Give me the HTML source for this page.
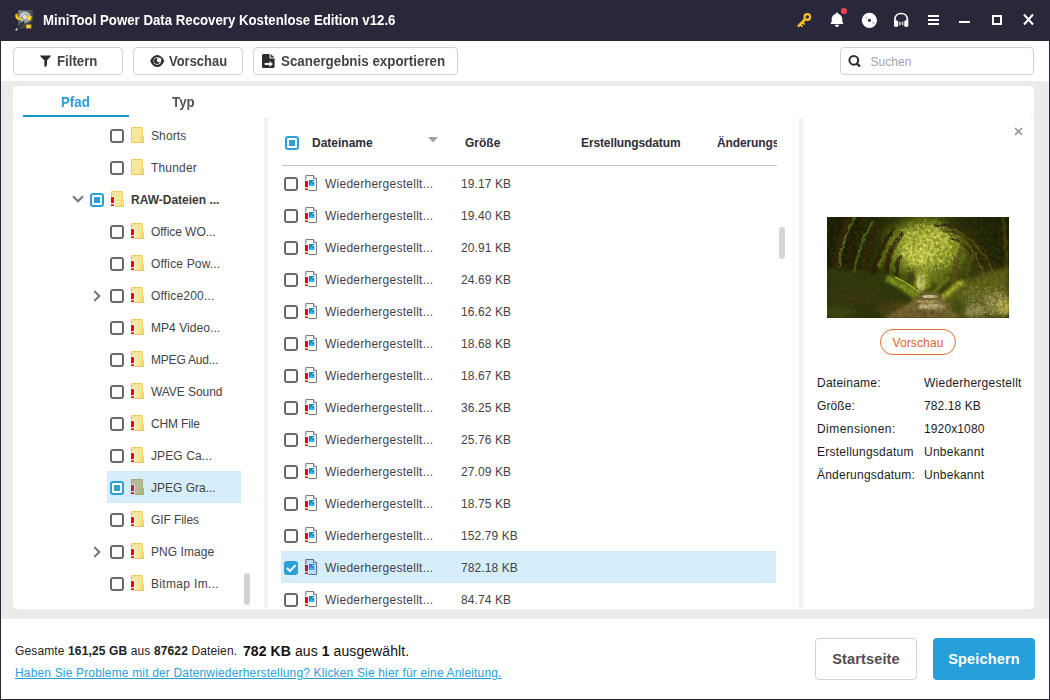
<!DOCTYPE html>
<html lang="de">
<head>
<meta charset="utf-8">
<title>MiniTool Power Data Recovery Kostenlose Edition v12.6</title>
<style>
*{box-sizing:border-box;margin:0;padding:0}
html,body{width:1050px;height:700px;overflow:hidden;background:#fff}
body{font-family:"Liberation Sans",sans-serif;color:#333;position:relative}
.a{position:absolute}
svg{position:absolute;overflow:visible}
#win{position:absolute;left:0;top:0;width:1050px;height:700px;background:#ebebeb;overflow:hidden}
#title{position:absolute;left:0;top:0;width:1050px;height:41px;background:#28283a}
#title .t{position:absolute;left:43px;top:11.8px;font-size:14px;transform:scaleX(0.9445);transform-origin:0 0;font-weight:bold;color:#fff;white-space:nowrap;line-height:16px}
#toolbar{position:absolute;left:0;top:41px;width:1050px;height:40px;background:#fff}
.tbtn{position:absolute;top:6px;height:28px;border:1px solid #d2d2d2;border-radius:4px;background:#fff;font-size:14px;font-weight:bold;color:#444;white-space:nowrap}
.tbtn span{position:absolute;top:-0.5px;line-height:27px;transform:scaleX(0.945);transform-origin:0 0}
#search{position:absolute;left:840px;top:6px;width:194px;height:28px;border:1px solid #d2d2d2;border-radius:4px;background:#fff}
#search span{position:absolute;left:29.4px;top:1px;line-height:27px;font-size:12px;letter-spacing:0.05px;color:#a3a3a3}
#panel{position:absolute;left:13px;top:86px;width:1021px;height:523px;background:#fff;border-radius:4px;overflow:hidden}
#footer{position:absolute;left:0;top:619px;width:1050px;height:81px;background:#fff}
.tab{position:absolute;top:94px;font-size:14px;transform:scaleX(0.95);transform-origin:0 0;font-weight:bold;line-height:16px;white-space:nowrap}
.trow{position:absolute;height:32px;font-size:12px;color:#444;white-space:nowrap;line-height:32px}
.cb{position:absolute;width:14px;height:14px;border:2px solid #6a6a6a;border-radius:3px;background:#fff}
.cb.p{border-color:#2a9fd8}
.cb.p:after{content:"";position:absolute;left:2px;top:2px;width:6px;height:6px;background:#2a9fd8}
.cb.c{border-color:#2a9fd8;background:#2a9fd8}
.tx{position:absolute;white-space:nowrap}
.t12{font-size:12px;color:#444;line-height:16px}
.hd{position:absolute;top:135px;font-size:12px;font-weight:bold;color:#2e2e38;line-height:16px;white-space:nowrap}
.kv{position:absolute;font-size:12px;color:#1c1c1c;line-height:16px;white-space:nowrap;overflow:hidden;letter-spacing:0.25px}
.btn{position:absolute;top:638px;height:42px;border-radius:4px;font-size:14.5px;letter-spacing:0.15px;font-weight:bold;text-align:center;line-height:40px;white-space:nowrap}
</style>
</head>
<body>
<div id="win">
<div id="title">
<svg style="left:15px;top:9.5px" width="20" height="22" viewBox="0 0 20 22">
<defs><linearGradient id="hd" x1="0" y1="0" x2="1" y2="1"><stop offset="0" stop-color="#8b9499"/><stop offset="0.45" stop-color="#4d565b"/><stop offset="1" stop-color="#1f2528"/></linearGradient>
<radialGradient id="pl" cx="0.4" cy="0.35" r="0.7"><stop offset="0" stop-color="#eef2f4"/><stop offset="0.55" stop-color="#aab5bb"/><stop offset="1" stop-color="#6f7a80"/></radialGradient></defs>
<rect x="3.2" y="0.3" width="14.8" height="18.2" rx="0.8" fill="url(#hd)"/>
<circle cx="10.2" cy="7.6" r="6" fill="url(#pl)"/>
<circle cx="10.2" cy="7.6" r="3.2" fill="none" stroke="#8d989e" stroke-width="0.8"/>
<circle cx="10.2" cy="7.6" r="1.3" fill="#dfe5e8"/>
<circle cx="6.9" cy="7.8" r="0.7" fill="#e03030"/>
<circle cx="10.6" cy="4.2" r="0.7" fill="#5a9ae0"/>
<path d="M0.3 5.4C0 9 3.8 11.2 8 9.4C5.6 9.2 2.8 7.8 2.6 4.8C1.6 4 0.5 4.4 0.3 5.4Z" fill="#f6d21a"/>
<path d="M0.5 5.2C0.9 4 2.2 3.8 3 4.4" fill="none" stroke="#f08a1a" stroke-width="1.1"/>
<path d="M0.8 20.2L11 9.8" stroke="#22272a" stroke-width="1.6"/><path d="M0.6 20.4L2.4 18.6" stroke="#d9dee1" stroke-width="1.4"/><path d="M9.2 11.6L11.2 9.6" stroke="#b9c0c4" stroke-width="1.3"/>
<path d="M14.2 4L15.3 6.3L17.8 6.6L16 8.4L16.4 10.9L14.2 9.7L12 10.9L12.4 8.4L10.6 6.6L13.1 6.3Z" fill="#f7c81a"/>
<path d="M14.2 5.4L14.8 6.9L16.3 7.1L15.2 8.1L15.5 9.6L14.2 8.9L12.9 9.6L13.2 8.1L12.1 7.1L13.6 6.9Z" fill="#fde45c"/>
<rect x="11" y="14.4" width="5.4" height="4.1" fill="#c99a12"/><rect x="11.7" y="15" width="4" height="2.9" fill="#f2c62e"/><path d="M13.2 15.6L14.7 16.45L13.2 17.3Z" fill="#fff7d0"/>
</svg>

<div class="t">MiniTool Power Data Recovery Kostenlose Edition v12.6</div>
<svg style="left:790px;top:0" width="260" height="41" viewBox="790 0 260 41">
<g fill="none" stroke="#f5c226" stroke-linecap="round"><circle cx="807.3" cy="17" r="2.8" stroke-width="2.2"/><path d="M805 19.4L798.6 25.8" stroke-width="2.5"/><path d="M800.4 24.6L801.9 26.1M802.7 22.5L804.1 23.9" stroke-width="1.9"/></g>
<path d="M837 12.6C837.8 12.6 838.1 13.2 838.2 13.8C840.6 14.5 842.3 16.4 842.3 19V21C842.3 22 842.7 22.6 843.3 23.2V24H830.7V23.2C831.3 22.6 831.7 22 831.7 21V19C831.7 16.4 833.4 14.5 835.8 13.8C835.9 13.2 836.2 12.6 837 12.6Z" fill="#fff"/>
<path d="M834.9 24.8H839.1C839 26.1 838.2 27 837 27C835.8 27 835 26.1 834.9 24.8Z" fill="#fff"/>
<circle cx="844" cy="11" r="3.1" fill="#ec424f"/>
<circle cx="869.4" cy="20.3" r="7.6" fill="#fff"/><rect x="868" y="18.9" width="2.8" height="2.8" rx="0.6" fill="#28283a"/>
<path d="M865.5 17.6L866.5 16.6M866.6 18.7L867.6 17.7M872.2 23L873.2 22M873.3 24.1L874.3 23.1" stroke="#6a6b7c" stroke-width="0.9"/>
<path d="M894.9 22V19.8C894.9 16 897.6 13.5 901.1 13.5C904.6 13.5 907.4 16 907.4 19.8V22" fill="none" stroke="#fff" stroke-width="1.7"/>
<rect x="894" y="20.2" width="4.1" height="6.9" rx="1.8" fill="#fff"/><rect x="904.2" y="20.2" width="4.1" height="6.9" rx="1.8" fill="#fff"/>
<path d="M898.9 21.3L900.7 22.2V24.8L898.9 25.7ZM903.4 21.3L901.6 22.2V24.8L903.4 25.7Z" fill="#c4c5cf"/>
<g fill="#fff"><rect x="928" y="15" width="11" height="2"/><rect x="928" y="19" width="11" height="2"/><rect x="928" y="23" width="11" height="2"/><rect x="959" y="21" width="11" height="2"/></g>
<rect x="993" y="16" width="8" height="8" fill="none" stroke="#fff" stroke-width="2"/>
<path d="M1024 14.5L1033 24.5M1033 14.5L1024 24.5" stroke="#fff" stroke-width="2" fill="none"/>
</svg>

</div>
<div id="toolbar">
<div class="tbtn" style="left:13px;width:110px"><svg style="left:26px;top:7px" width="12" height="13" viewBox="0 0 12 13"><path d="M0.3 0.4H10.7Q11.3 0.4 10.9 0.9L7 5.6V10.4L4.4 12.2V5.6L0.1 0.9Q-0.3 0.4 0.3 0.4Z" fill="#2d2d2d"/></svg>
<span style="left:43px">Filtern</span></div>
<div class="tbtn" style="left:133px;width:110px"><svg style="left:16px;top:7px" width="15" height="12" viewBox="0 0 15 12"><path d="M0.1 6C1.7 2.3 4.3 -0.1 7.2 -0.1C10.1 -0.1 12.7 2.3 14.3 6C12.7 9.7 10.1 12.1 7.2 12.1C4.3 12.1 1.7 9.7 0.1 6Z" fill="#2d2d2d"/><circle cx="7.2" cy="6" r="3.7" fill="#fff"/><circle cx="7" cy="6.1" r="3" fill="#2d2d2d"/><circle cx="9" cy="5" r="2.3" fill="#fff"/></svg>
<span style="left:35px;transform:scaleX(0.925)">Vorschau</span></div>
<div class="tbtn" style="left:253px;width:205px"><svg style="left:8px;top:6px" width="13" height="14" viewBox="0 0 13 14"><path d="M1.6 0H7.6V4.4H12.6V12.4Q12.6 14 11 14H1.6Q0 14 0 12.4V1.6Q0 0 1.6 0Z" fill="#2d2d2d"/><path d="M8.6 0L12.6 3.6H8.6Z" fill="#2d2d2d"/><path d="M2.6 9H7.4V7L11 10L7.4 13V11H2.6Z" fill="#fff"/></svg>
<span style="left:27px;transform:scaleX(0.955)">Scanergebnis exportieren</span></div>
<div id="search"><svg style="left:6px;top:6px" width="14" height="14" viewBox="0 0 14 14"><circle cx="6.8" cy="6.3" r="4.4" fill="none" stroke="#2d2d2d" stroke-width="2"/><path d="M10 9.6L12.3 11.9" stroke="#2d2d2d" stroke-width="2.3" stroke-linecap="round"/></svg>
<span>Suchen</span></div>
</div>
<div id="panel"></div>
<div class="a" style="left:264px;top:118px;width:4px;height:490px;background:#f1f2f7"></div>
<div class="a" style="left:799px;top:118px;width:4px;height:490px;background:#f1f2f7"></div>
<div class="a" style="left:1031px;top:116px;width:3px;height:1.5px;background:rgba(235,235,235,.8)"></div>
<div class="a" style="left:13px;top:116px;width:3px;height:1.5px;background:rgba(235,235,235,.6)"></div>
<div class="tab" style="left:61px;color:#2a9fd8">Pfad</div>
<div class="tab" style="left:171.5px;color:#555">Typ</div>
<div class="a" style="left:23px;top:115px;width:106px;height:2px;background:#1292d6"></div>
<div class="cb" style="left:110px;top:129px"></div>
<svg style="left:131px;top:127px" width="13" height="16" viewBox="0 0 13 16"><path d="M0.5 0.5H11.3V15.5H0.5Z" fill="#fde699" stroke="#f2cb5a"/><path d="M10.3 15.5V9.6Q10.3 8.9 11 8.9H11.8Q12.5 8.9 12.5 9.7V15.5Z" fill="#fde699" stroke="#f2cb5a"/></svg>
<div class="tx t12" style="left:151px;top:128px;letter-spacing:0.12px">Shorts</div>
<div class="cb" style="left:110px;top:161px"></div>
<svg style="left:131px;top:159px" width="13" height="16" viewBox="0 0 13 16"><path d="M0.5 0.5H11.3V15.5H0.5Z" fill="#fde699" stroke="#f2cb5a"/><path d="M10.3 15.5V9.6Q10.3 8.9 11 8.9H11.8Q12.5 8.9 12.5 9.7V15.5Z" fill="#fde699" stroke="#f2cb5a"/></svg>
<div class="tx t12" style="left:151px;top:160px;letter-spacing:0.17px">Thunder</div>
<svg style="left:72px;top:195.3px" width="12" height="8" viewBox="0 0 12 8"><path d="M1 1.2L6 6.3L11 1.2" fill="none" stroke="#787878" stroke-width="2.1"/></svg>
<div class="cb p" style="left:90px;top:193px"></div>
<svg style="left:111px;top:191px" width="13" height="16" viewBox="0 0 13 16"><path d="M0.5 0.5H11.3V15.5H0.5Z" fill="#fde699" stroke="#f2cb5a"/><path d="M10.3 15.5V9.6Q10.3 8.9 11 8.9H11.8Q12.5 8.9 12.5 9.7V15.5Z" fill="#fde699" stroke="#f2cb5a"/><path d="M-0.6 5.2H3.8V16H-0.6Z" fill="#fff"/><rect x="0" y="6.1" width="3" height="6" fill="#ff0000"/><rect x="0" y="13.3" width="3" height="1.8" fill="#ff0000"/></svg>
<div class="tx t12" style="left:131px;top:192px;font-weight:bold;color:#3a3a3a">RAW-Dateien ...</div>
<div class="cb" style="left:110px;top:225px"></div>
<svg style="left:131px;top:223px" width="13" height="16" viewBox="0 0 13 16"><path d="M0.5 0.5H11.3V15.5H0.5Z" fill="#fde699" stroke="#f2cb5a"/><path d="M10.3 15.5V9.6Q10.3 8.9 11 8.9H11.8Q12.5 8.9 12.5 9.7V15.5Z" fill="#fde699" stroke="#f2cb5a"/><path d="M-0.6 5.2H3.8V16H-0.6Z" fill="#fff"/><rect x="0" y="6.1" width="3" height="6" fill="#ff0000"/><rect x="0" y="13.3" width="3" height="1.8" fill="#ff0000"/></svg>
<div class="tx t12" style="left:151px;top:224px;letter-spacing:-0.05px">Office WO...</div>
<div class="cb" style="left:110px;top:257px"></div>
<svg style="left:131px;top:255px" width="13" height="16" viewBox="0 0 13 16"><path d="M0.5 0.5H11.3V15.5H0.5Z" fill="#fde699" stroke="#f2cb5a"/><path d="M10.3 15.5V9.6Q10.3 8.9 11 8.9H11.8Q12.5 8.9 12.5 9.7V15.5Z" fill="#fde699" stroke="#f2cb5a"/><path d="M-0.6 5.2H3.8V16H-0.6Z" fill="#fff"/><rect x="0" y="6.1" width="3" height="6" fill="#ff0000"/><rect x="0" y="13.3" width="3" height="1.8" fill="#ff0000"/></svg>
<div class="tx t12" style="left:151px;top:256px;letter-spacing:0.17px">Office Pow...</div>
<svg style="left:93px;top:289.5px" width="8" height="12" viewBox="0 0 8 12"><path d="M1.2 1L6.3 6L1.2 11" fill="none" stroke="#787878" stroke-width="2.1"/></svg>
<div class="cb" style="left:110px;top:289px"></div>
<svg style="left:131px;top:287px" width="13" height="16" viewBox="0 0 13 16"><path d="M0.5 0.5H11.3V15.5H0.5Z" fill="#fde699" stroke="#f2cb5a"/><path d="M10.3 15.5V9.6Q10.3 8.9 11 8.9H11.8Q12.5 8.9 12.5 9.7V15.5Z" fill="#fde699" stroke="#f2cb5a"/><path d="M-0.6 5.2H3.8V16H-0.6Z" fill="#fff"/><rect x="0" y="6.1" width="3" height="6" fill="#ff0000"/><rect x="0" y="13.3" width="3" height="1.8" fill="#ff0000"/></svg>
<div class="tx t12" style="left:151px;top:288px;letter-spacing:0.20px">Office200...</div>
<div class="cb" style="left:110px;top:321px"></div>
<svg style="left:131px;top:319px" width="13" height="16" viewBox="0 0 13 16"><path d="M0.5 0.5H11.3V15.5H0.5Z" fill="#fde699" stroke="#f2cb5a"/><path d="M10.3 15.5V9.6Q10.3 8.9 11 8.9H11.8Q12.5 8.9 12.5 9.7V15.5Z" fill="#fde699" stroke="#f2cb5a"/><path d="M-0.6 5.2H3.8V16H-0.6Z" fill="#fff"/><rect x="0" y="6.1" width="3" height="6" fill="#ff0000"/><rect x="0" y="13.3" width="3" height="1.8" fill="#ff0000"/></svg>
<div class="tx t12" style="left:151px;top:320px;letter-spacing:0.06px">MP4 Video...</div>
<div class="cb" style="left:110px;top:353px"></div>
<svg style="left:131px;top:351px" width="13" height="16" viewBox="0 0 13 16"><path d="M0.5 0.5H11.3V15.5H0.5Z" fill="#fde699" stroke="#f2cb5a"/><path d="M10.3 15.5V9.6Q10.3 8.9 11 8.9H11.8Q12.5 8.9 12.5 9.7V15.5Z" fill="#fde699" stroke="#f2cb5a"/><path d="M-0.6 5.2H3.8V16H-0.6Z" fill="#fff"/><rect x="0" y="6.1" width="3" height="6" fill="#ff0000"/><rect x="0" y="13.3" width="3" height="1.8" fill="#ff0000"/></svg>
<div class="tx t12" style="left:151px;top:352px;letter-spacing:-0.20px">MPEG Aud...</div>
<div class="cb" style="left:110px;top:385px"></div>
<svg style="left:131px;top:383px" width="13" height="16" viewBox="0 0 13 16"><path d="M0.5 0.5H11.3V15.5H0.5Z" fill="#fde699" stroke="#f2cb5a"/><path d="M10.3 15.5V9.6Q10.3 8.9 11 8.9H11.8Q12.5 8.9 12.5 9.7V15.5Z" fill="#fde699" stroke="#f2cb5a"/><path d="M-0.6 5.2H3.8V16H-0.6Z" fill="#fff"/><rect x="0" y="6.1" width="3" height="6" fill="#ff0000"/><rect x="0" y="13.3" width="3" height="1.8" fill="#ff0000"/></svg>
<div class="tx t12" style="left:151px;top:384px;letter-spacing:-0.06px">WAVE Sound</div>
<div class="cb" style="left:110px;top:417px"></div>
<svg style="left:131px;top:415px" width="13" height="16" viewBox="0 0 13 16"><path d="M0.5 0.5H11.3V15.5H0.5Z" fill="#fde699" stroke="#f2cb5a"/><path d="M10.3 15.5V9.6Q10.3 8.9 11 8.9H11.8Q12.5 8.9 12.5 9.7V15.5Z" fill="#fde699" stroke="#f2cb5a"/><path d="M-0.6 5.2H3.8V16H-0.6Z" fill="#fff"/><rect x="0" y="6.1" width="3" height="6" fill="#ff0000"/><rect x="0" y="13.3" width="3" height="1.8" fill="#ff0000"/></svg>
<div class="tx t12" style="left:151px;top:416px;letter-spacing:-0.16px">CHM File</div>
<div class="cb" style="left:110px;top:449px"></div>
<svg style="left:131px;top:447px" width="13" height="16" viewBox="0 0 13 16"><path d="M0.5 0.5H11.3V15.5H0.5Z" fill="#fde699" stroke="#f2cb5a"/><path d="M10.3 15.5V9.6Q10.3 8.9 11 8.9H11.8Q12.5 8.9 12.5 9.7V15.5Z" fill="#fde699" stroke="#f2cb5a"/><path d="M-0.6 5.2H3.8V16H-0.6Z" fill="#fff"/><rect x="0" y="6.1" width="3" height="6" fill="#ff0000"/><rect x="0" y="13.3" width="3" height="1.8" fill="#ff0000"/></svg>
<div class="tx t12" style="left:151px;top:448px;letter-spacing:0.11px">JPEG Ca...</div>
<div class="a" style="left:107px;top:471px;width:134px;height:32px;background:#d6edfc"></div>
<div class="cb p" style="left:110px;top:481px"></div>
<svg style="left:131px;top:479px" width="13" height="16" viewBox="0 0 13 16"><path d="M0.5 0.5H11.3V15.5H0.5Z" fill="#b4bb90" stroke="#a3a878"/><path d="M10.3 15.5V9.6Q10.3 8.9 11 8.9H11.8Q12.5 8.9 12.5 9.7V15.5Z" fill="#b4bb90" stroke="#a3a878"/><path d="M-0.6 5.2H3.8V16H-0.6Z" fill="#d6edfc"/><rect x="0" y="6.1" width="3" height="6" fill="#c21840"/><rect x="0" y="13.3" width="3" height="1.8" fill="#c21840"/></svg>
<div class="tx t12" style="left:151px;top:480px;letter-spacing:0.00px">JPEG Gra...</div>
<div class="cb" style="left:110px;top:513px"></div>
<svg style="left:131px;top:511px" width="13" height="16" viewBox="0 0 13 16"><path d="M0.5 0.5H11.3V15.5H0.5Z" fill="#fde699" stroke="#f2cb5a"/><path d="M10.3 15.5V9.6Q10.3 8.9 11 8.9H11.8Q12.5 8.9 12.5 9.7V15.5Z" fill="#fde699" stroke="#f2cb5a"/><path d="M-0.6 5.2H3.8V16H-0.6Z" fill="#fff"/><rect x="0" y="6.1" width="3" height="6" fill="#ff0000"/><rect x="0" y="13.3" width="3" height="1.8" fill="#ff0000"/></svg>
<div class="tx t12" style="left:151px;top:512px;letter-spacing:-0.08px">GIF Files</div>
<svg style="left:93px;top:545.5px" width="8" height="12" viewBox="0 0 8 12"><path d="M1.2 1L6.3 6L1.2 11" fill="none" stroke="#787878" stroke-width="2.1"/></svg>
<div class="cb" style="left:110px;top:545px"></div>
<svg style="left:131px;top:543px" width="13" height="16" viewBox="0 0 13 16"><path d="M0.5 0.5H11.3V15.5H0.5Z" fill="#fde699" stroke="#f2cb5a"/><path d="M10.3 15.5V9.6Q10.3 8.9 11 8.9H11.8Q12.5 8.9 12.5 9.7V15.5Z" fill="#fde699" stroke="#f2cb5a"/><path d="M-0.6 5.2H3.8V16H-0.6Z" fill="#fff"/><rect x="0" y="6.1" width="3" height="6" fill="#ff0000"/><rect x="0" y="13.3" width="3" height="1.8" fill="#ff0000"/></svg>
<div class="tx t12" style="left:151px;top:544px;letter-spacing:0.05px">PNG Image</div>
<div class="cb" style="left:110px;top:577px"></div>
<svg style="left:131px;top:575px" width="13" height="16" viewBox="0 0 13 16"><path d="M0.5 0.5H11.3V15.5H0.5Z" fill="#fde699" stroke="#f2cb5a"/><path d="M10.3 15.5V9.6Q10.3 8.9 11 8.9H11.8Q12.5 8.9 12.5 9.7V15.5Z" fill="#fde699" stroke="#f2cb5a"/><path d="M-0.6 5.2H3.8V16H-0.6Z" fill="#fff"/><rect x="0" y="6.1" width="3" height="6" fill="#ff0000"/><rect x="0" y="13.3" width="3" height="1.8" fill="#ff0000"/></svg>
<div class="tx t12" style="left:151px;top:576px;letter-spacing:0.33px">Bitmap Im...</div>
<div class="a" style="left:244px;top:573px;width:6px;height:32px;border-radius:3px;background:#d2d2d2"></div>
<div class="cb p" style="left:285px;top:136px"></div>
<div class="hd" style="left:312px">Dateiname</div>
<svg style="left:428px;top:137px" width="10" height="6" viewBox="0 0 10 6"><path d="M0 0H10L5 5.5Z" fill="#a0a0a0"/></svg>
<div class="hd" style="left:465px">Größe</div>
<div class="hd" style="left:581px;letter-spacing:-0.12px">Erstellungsdatum</div>
<div class="hd" style="left:717px;width:60px;overflow:hidden;letter-spacing:-0.12px">Änderungsdatum</div>
<div class="a" style="left:282px;top:165px;width:495px;height:1px;background:#c4c4c4"></div>
<div class="cb" style="left:284px;top:177px"></div>
<svg style="left:305px;top:175px" width="13" height="16" viewBox="0 0 13 16"><path d="M0.8 0.5H8.5L11.6 3.6V15.5H0.8Z" fill="#fbfbfb" stroke="#777" stroke-width="1"/><path d="M8.5 0.5V3.6H11.6" fill="#fff" stroke="#777" stroke-width="1"/><rect x="4" y="5" width="5.2" height="6" fill="#1e7fe0"/><path d="M4 11L6.2 7.5L7.8 9.5L9.2 8.5V11Z" fill="#3fb0f5"/><rect x="7.3" y="6" width="1.2" height="1.2" fill="#e8f4ff"/><path d="M-0.6 5.2H3.6V16.4H-0.6Z" fill="#fff"/><rect x="0" y="6" width="3" height="6.3" fill="#ff0000"/><rect x="0" y="13.5" width="3" height="1.6" fill="#ff0000"/></svg>
<div class="tx t12" style="left:325px;top:176px;letter-spacing:0.25px">Wiederhergestellt...</div>
<div class="tx t12" style="left:461px;top:176px;letter-spacing:0.1px">19.17 KB</div>
<div class="cb" style="left:284px;top:209px"></div>
<svg style="left:305px;top:207px" width="13" height="16" viewBox="0 0 13 16"><path d="M0.8 0.5H8.5L11.6 3.6V15.5H0.8Z" fill="#fbfbfb" stroke="#777" stroke-width="1"/><path d="M8.5 0.5V3.6H11.6" fill="#fff" stroke="#777" stroke-width="1"/><rect x="4" y="5" width="5.2" height="6" fill="#1e7fe0"/><path d="M4 11L6.2 7.5L7.8 9.5L9.2 8.5V11Z" fill="#3fb0f5"/><rect x="7.3" y="6" width="1.2" height="1.2" fill="#e8f4ff"/><path d="M-0.6 5.2H3.6V16.4H-0.6Z" fill="#fff"/><rect x="0" y="6" width="3" height="6.3" fill="#ff0000"/><rect x="0" y="13.5" width="3" height="1.6" fill="#ff0000"/></svg>
<div class="tx t12" style="left:325px;top:208px;letter-spacing:0.25px">Wiederhergestellt...</div>
<div class="tx t12" style="left:461px;top:208px;letter-spacing:0.1px">19.40 KB</div>
<div class="cb" style="left:284px;top:241px"></div>
<svg style="left:305px;top:239px" width="13" height="16" viewBox="0 0 13 16"><path d="M0.8 0.5H8.5L11.6 3.6V15.5H0.8Z" fill="#fbfbfb" stroke="#777" stroke-width="1"/><path d="M8.5 0.5V3.6H11.6" fill="#fff" stroke="#777" stroke-width="1"/><rect x="4" y="5" width="5.2" height="6" fill="#1e7fe0"/><path d="M4 11L6.2 7.5L7.8 9.5L9.2 8.5V11Z" fill="#3fb0f5"/><rect x="7.3" y="6" width="1.2" height="1.2" fill="#e8f4ff"/><path d="M-0.6 5.2H3.6V16.4H-0.6Z" fill="#fff"/><rect x="0" y="6" width="3" height="6.3" fill="#ff0000"/><rect x="0" y="13.5" width="3" height="1.6" fill="#ff0000"/></svg>
<div class="tx t12" style="left:325px;top:240px;letter-spacing:0.25px">Wiederhergestellt...</div>
<div class="tx t12" style="left:461px;top:240px;letter-spacing:0.1px">20.91 KB</div>
<div class="cb" style="left:284px;top:273px"></div>
<svg style="left:305px;top:271px" width="13" height="16" viewBox="0 0 13 16"><path d="M0.8 0.5H8.5L11.6 3.6V15.5H0.8Z" fill="#fbfbfb" stroke="#777" stroke-width="1"/><path d="M8.5 0.5V3.6H11.6" fill="#fff" stroke="#777" stroke-width="1"/><rect x="4" y="5" width="5.2" height="6" fill="#1e7fe0"/><path d="M4 11L6.2 7.5L7.8 9.5L9.2 8.5V11Z" fill="#3fb0f5"/><rect x="7.3" y="6" width="1.2" height="1.2" fill="#e8f4ff"/><path d="M-0.6 5.2H3.6V16.4H-0.6Z" fill="#fff"/><rect x="0" y="6" width="3" height="6.3" fill="#ff0000"/><rect x="0" y="13.5" width="3" height="1.6" fill="#ff0000"/></svg>
<div class="tx t12" style="left:325px;top:272px;letter-spacing:0.25px">Wiederhergestellt...</div>
<div class="tx t12" style="left:461px;top:272px;letter-spacing:0.1px">24.69 KB</div>
<div class="cb" style="left:284px;top:305px"></div>
<svg style="left:305px;top:303px" width="13" height="16" viewBox="0 0 13 16"><path d="M0.8 0.5H8.5L11.6 3.6V15.5H0.8Z" fill="#fbfbfb" stroke="#777" stroke-width="1"/><path d="M8.5 0.5V3.6H11.6" fill="#fff" stroke="#777" stroke-width="1"/><rect x="4" y="5" width="5.2" height="6" fill="#1e7fe0"/><path d="M4 11L6.2 7.5L7.8 9.5L9.2 8.5V11Z" fill="#3fb0f5"/><rect x="7.3" y="6" width="1.2" height="1.2" fill="#e8f4ff"/><path d="M-0.6 5.2H3.6V16.4H-0.6Z" fill="#fff"/><rect x="0" y="6" width="3" height="6.3" fill="#ff0000"/><rect x="0" y="13.5" width="3" height="1.6" fill="#ff0000"/></svg>
<div class="tx t12" style="left:325px;top:304px;letter-spacing:0.25px">Wiederhergestellt...</div>
<div class="tx t12" style="left:461px;top:304px;letter-spacing:0.1px">16.62 KB</div>
<div class="cb" style="left:284px;top:337px"></div>
<svg style="left:305px;top:335px" width="13" height="16" viewBox="0 0 13 16"><path d="M0.8 0.5H8.5L11.6 3.6V15.5H0.8Z" fill="#fbfbfb" stroke="#777" stroke-width="1"/><path d="M8.5 0.5V3.6H11.6" fill="#fff" stroke="#777" stroke-width="1"/><rect x="4" y="5" width="5.2" height="6" fill="#1e7fe0"/><path d="M4 11L6.2 7.5L7.8 9.5L9.2 8.5V11Z" fill="#3fb0f5"/><rect x="7.3" y="6" width="1.2" height="1.2" fill="#e8f4ff"/><path d="M-0.6 5.2H3.6V16.4H-0.6Z" fill="#fff"/><rect x="0" y="6" width="3" height="6.3" fill="#ff0000"/><rect x="0" y="13.5" width="3" height="1.6" fill="#ff0000"/></svg>
<div class="tx t12" style="left:325px;top:336px;letter-spacing:0.25px">Wiederhergestellt...</div>
<div class="tx t12" style="left:461px;top:336px;letter-spacing:0.1px">18.68 KB</div>
<div class="cb" style="left:284px;top:369px"></div>
<svg style="left:305px;top:367px" width="13" height="16" viewBox="0 0 13 16"><path d="M0.8 0.5H8.5L11.6 3.6V15.5H0.8Z" fill="#fbfbfb" stroke="#777" stroke-width="1"/><path d="M8.5 0.5V3.6H11.6" fill="#fff" stroke="#777" stroke-width="1"/><rect x="4" y="5" width="5.2" height="6" fill="#1e7fe0"/><path d="M4 11L6.2 7.5L7.8 9.5L9.2 8.5V11Z" fill="#3fb0f5"/><rect x="7.3" y="6" width="1.2" height="1.2" fill="#e8f4ff"/><path d="M-0.6 5.2H3.6V16.4H-0.6Z" fill="#fff"/><rect x="0" y="6" width="3" height="6.3" fill="#ff0000"/><rect x="0" y="13.5" width="3" height="1.6" fill="#ff0000"/></svg>
<div class="tx t12" style="left:325px;top:368px;letter-spacing:0.25px">Wiederhergestellt...</div>
<div class="tx t12" style="left:461px;top:368px;letter-spacing:0.1px">18.67 KB</div>
<div class="cb" style="left:284px;top:401px"></div>
<svg style="left:305px;top:399px" width="13" height="16" viewBox="0 0 13 16"><path d="M0.8 0.5H8.5L11.6 3.6V15.5H0.8Z" fill="#fbfbfb" stroke="#777" stroke-width="1"/><path d="M8.5 0.5V3.6H11.6" fill="#fff" stroke="#777" stroke-width="1"/><rect x="4" y="5" width="5.2" height="6" fill="#1e7fe0"/><path d="M4 11L6.2 7.5L7.8 9.5L9.2 8.5V11Z" fill="#3fb0f5"/><rect x="7.3" y="6" width="1.2" height="1.2" fill="#e8f4ff"/><path d="M-0.6 5.2H3.6V16.4H-0.6Z" fill="#fff"/><rect x="0" y="6" width="3" height="6.3" fill="#ff0000"/><rect x="0" y="13.5" width="3" height="1.6" fill="#ff0000"/></svg>
<div class="tx t12" style="left:325px;top:400px;letter-spacing:0.25px">Wiederhergestellt...</div>
<div class="tx t12" style="left:461px;top:400px;letter-spacing:0.1px">36.25 KB</div>
<div class="cb" style="left:284px;top:433px"></div>
<svg style="left:305px;top:431px" width="13" height="16" viewBox="0 0 13 16"><path d="M0.8 0.5H8.5L11.6 3.6V15.5H0.8Z" fill="#fbfbfb" stroke="#777" stroke-width="1"/><path d="M8.5 0.5V3.6H11.6" fill="#fff" stroke="#777" stroke-width="1"/><rect x="4" y="5" width="5.2" height="6" fill="#1e7fe0"/><path d="M4 11L6.2 7.5L7.8 9.5L9.2 8.5V11Z" fill="#3fb0f5"/><rect x="7.3" y="6" width="1.2" height="1.2" fill="#e8f4ff"/><path d="M-0.6 5.2H3.6V16.4H-0.6Z" fill="#fff"/><rect x="0" y="6" width="3" height="6.3" fill="#ff0000"/><rect x="0" y="13.5" width="3" height="1.6" fill="#ff0000"/></svg>
<div class="tx t12" style="left:325px;top:432px;letter-spacing:0.25px">Wiederhergestellt...</div>
<div class="tx t12" style="left:461px;top:432px;letter-spacing:0.1px">25.76 KB</div>
<div class="cb" style="left:284px;top:465px"></div>
<svg style="left:305px;top:463px" width="13" height="16" viewBox="0 0 13 16"><path d="M0.8 0.5H8.5L11.6 3.6V15.5H0.8Z" fill="#fbfbfb" stroke="#777" stroke-width="1"/><path d="M8.5 0.5V3.6H11.6" fill="#fff" stroke="#777" stroke-width="1"/><rect x="4" y="5" width="5.2" height="6" fill="#1e7fe0"/><path d="M4 11L6.2 7.5L7.8 9.5L9.2 8.5V11Z" fill="#3fb0f5"/><rect x="7.3" y="6" width="1.2" height="1.2" fill="#e8f4ff"/><path d="M-0.6 5.2H3.6V16.4H-0.6Z" fill="#fff"/><rect x="0" y="6" width="3" height="6.3" fill="#ff0000"/><rect x="0" y="13.5" width="3" height="1.6" fill="#ff0000"/></svg>
<div class="tx t12" style="left:325px;top:464px;letter-spacing:0.25px">Wiederhergestellt...</div>
<div class="tx t12" style="left:461px;top:464px;letter-spacing:0.1px">27.09 KB</div>
<div class="cb" style="left:284px;top:497px"></div>
<svg style="left:305px;top:495px" width="13" height="16" viewBox="0 0 13 16"><path d="M0.8 0.5H8.5L11.6 3.6V15.5H0.8Z" fill="#fbfbfb" stroke="#777" stroke-width="1"/><path d="M8.5 0.5V3.6H11.6" fill="#fff" stroke="#777" stroke-width="1"/><rect x="4" y="5" width="5.2" height="6" fill="#1e7fe0"/><path d="M4 11L6.2 7.5L7.8 9.5L9.2 8.5V11Z" fill="#3fb0f5"/><rect x="7.3" y="6" width="1.2" height="1.2" fill="#e8f4ff"/><path d="M-0.6 5.2H3.6V16.4H-0.6Z" fill="#fff"/><rect x="0" y="6" width="3" height="6.3" fill="#ff0000"/><rect x="0" y="13.5" width="3" height="1.6" fill="#ff0000"/></svg>
<div class="tx t12" style="left:325px;top:496px;letter-spacing:0.25px">Wiederhergestellt...</div>
<div class="tx t12" style="left:461px;top:496px;letter-spacing:0.1px">18.75 KB</div>
<div class="cb" style="left:284px;top:529px"></div>
<svg style="left:305px;top:527px" width="13" height="16" viewBox="0 0 13 16"><path d="M0.8 0.5H8.5L11.6 3.6V15.5H0.8Z" fill="#fbfbfb" stroke="#777" stroke-width="1"/><path d="M8.5 0.5V3.6H11.6" fill="#fff" stroke="#777" stroke-width="1"/><rect x="4" y="5" width="5.2" height="6" fill="#1e7fe0"/><path d="M4 11L6.2 7.5L7.8 9.5L9.2 8.5V11Z" fill="#3fb0f5"/><rect x="7.3" y="6" width="1.2" height="1.2" fill="#e8f4ff"/><path d="M-0.6 5.2H3.6V16.4H-0.6Z" fill="#fff"/><rect x="0" y="6" width="3" height="6.3" fill="#ff0000"/><rect x="0" y="13.5" width="3" height="1.6" fill="#ff0000"/></svg>
<div class="tx t12" style="left:325px;top:528px;letter-spacing:0.25px">Wiederhergestellt...</div>
<div class="tx t12" style="left:461px;top:528px;letter-spacing:0.1px">152.79 KB</div>
<div class="a" style="left:281px;top:551px;width:495px;height:32px;background:#d6edfc"></div>
<div class="cb c" style="left:284px;top:561px"><svg style="left:-2px;top:-2px" width="14" height="14" viewBox="0 0 14 14"><path d="M2.9 7L6 10L11.6 4.1" fill="none" stroke="#fff" stroke-width="2"/></svg></div>
<svg style="left:305px;top:559px" width="13" height="16" viewBox="0 0 13 16"><path d="M0.8 0.5H8.5L11.6 3.6V15.5H0.8Z" fill="#bcdcf4" stroke="#4f6f8f" stroke-width="1"/><path d="M8.5 0.5V3.6H11.6" fill="#d4eafa" stroke="#4f6f8f" stroke-width="1"/><rect x="4" y="5" width="5.2" height="6" fill="#1e7fe0"/><path d="M4 11L6.2 7.5L7.8 9.5L9.2 8.5V11Z" fill="#3fb0f5"/><rect x="7.3" y="6" width="1.2" height="1.2" fill="#e8f4ff"/><path d="M-0.6 5.2H3.6V16.4H-0.6Z" fill="#d6edfc"/><rect x="0" y="6" width="3" height="6.3" fill="#c4122e"/><rect x="0" y="13.5" width="3" height="1.6" fill="#c4122e"/></svg>
<div class="tx t12" style="left:325px;top:560px;letter-spacing:0.25px">Wiederhergestellt...</div>
<div class="tx t12" style="left:461px;top:560px;letter-spacing:0.1px">782.18 KB</div>
<div class="cb" style="left:284px;top:593px"></div>
<svg style="left:305px;top:591px" width="13" height="16" viewBox="0 0 13 16"><path d="M0.8 0.5H8.5L11.6 3.6V15.5H0.8Z" fill="#fbfbfb" stroke="#777" stroke-width="1"/><path d="M8.5 0.5V3.6H11.6" fill="#fff" stroke="#777" stroke-width="1"/><rect x="4" y="5" width="5.2" height="6" fill="#1e7fe0"/><path d="M4 11L6.2 7.5L7.8 9.5L9.2 8.5V11Z" fill="#3fb0f5"/><rect x="7.3" y="6" width="1.2" height="1.2" fill="#e8f4ff"/><path d="M-0.6 5.2H3.6V16.4H-0.6Z" fill="#fff"/><rect x="0" y="6" width="3" height="6.3" fill="#ff0000"/><rect x="0" y="13.5" width="3" height="1.6" fill="#ff0000"/></svg>
<div class="tx t12" style="left:325px;top:592px;letter-spacing:0.25px">Wiederhergestellt...</div>
<div class="tx t12" style="left:461px;top:592px;letter-spacing:0.1px">84.74 KB</div>
<div class="a" style="left:779px;top:227px;width:6px;height:32px;border-radius:3px;background:#d5d5d5"></div>
<div class="a" style="left:0;top:609px;width:1050px;height:10px;background:#ebebeb"></div>
<svg style="left:1014px;top:127px" width="9" height="9" viewBox="0 0 9 9"><path d="M1 1L8 8M8 1L1 8" stroke="#9a9a9a" stroke-width="1.7" fill="none"/></svg>
<svg style="left:827px;top:217px" width="182" height="101" viewBox="0 0 182 101">
<defs>
<filter id="b6" x="-40%" y="-40%" width="180%" height="180%"><feGaussianBlur stdDeviation="6"/></filter>
<filter id="b4" x="-40%" y="-40%" width="180%" height="180%"><feGaussianBlur stdDeviation="4"/></filter>
<filter id="b3" x="-40%" y="-40%" width="180%" height="180%"><feGaussianBlur stdDeviation="2.6"/></filter>
<filter id="b2" x="-40%" y="-40%" width="180%" height="180%"><feGaussianBlur stdDeviation="1.4"/></filter>
<filter id="b1" x="-40%" y="-40%" width="180%" height="180%"><feGaussianBlur stdDeviation="0.7"/></filter>
<filter id="nz" x="0" y="0" width="100%" height="100%"><feTurbulence type="fractalNoise" baseFrequency="0.3" numOctaves="3" seed="7"/><feColorMatrix type="matrix" values="0 0 0 0 0.5  0 0 0 0 0.5  0 0 0 0 0.2  1.6 1.6 0 0 -1.1"/></filter>
<filter id="nd" x="0" y="0" width="100%" height="100%"><feTurbulence type="fractalNoise" baseFrequency="0.28" numOctaves="3" seed="23"/><feColorMatrix type="matrix" values="0 0 0 0 0.05  0 0 0 0 0.05  0 0 0 0 0  0 1.7 1.7 0 -1.25"/></filter>
<filter id="rg" x="-10%" y="-10%" width="120%" height="120%"><feTurbulence type="fractalNoise" baseFrequency="0.18" numOctaves="2" seed="3" result="t"/><feDisplacementMap in="SourceGraphic" in2="t" scale="5" xChannelSelector="R" yChannelSelector="G"/><feGaussianBlur stdDeviation="0.5"/></filter>
<filter id="ny" x="0" y="0" width="100%" height="100%"><feTurbulence type="fractalNoise" baseFrequency="0.55" numOctaves="2" seed="11"/><feColorMatrix type="matrix" values="0 0 0 0 0.88  0 0 0 0 0.9  0 0 0 0 0.38  2.6 0 2.6 0 -2.45"/></filter>
<filter id="nw" x="0" y="0" width="100%" height="100%"><feTurbulence type="fractalNoise" baseFrequency="0.6" numOctaves="2" seed="31"/><feColorMatrix type="matrix" values="0 0 0 0 0.9  0 0 0 0 0.88  0 0 0 0 0.7  2.8 2.8 0 0 -2.75"/></filter>
<radialGradient id="mg1" cx="0.5" cy="0.5" r="0.5"><stop offset="0" stop-color="#fff"/><stop offset="0.6" stop-color="#fff" stop-opacity="0.8"/><stop offset="1" stop-color="#fff" stop-opacity="0"/></radialGradient>
<mask id="mk1"><ellipse cx="100" cy="30" rx="40" ry="32" fill="url(#mg1)"/></mask>
<mask id="mk2"><ellipse cx="160" cy="84" rx="30" ry="22" fill="url(#mg1)"/></mask>
<radialGradient id="vg" gradientUnits="userSpaceOnUse" cx="100" cy="44" r="100" gradientTransform="translate(100 44) scale(1 0.72) translate(-100 -44)"><stop offset="0" stop-color="#0e1204" stop-opacity="0"/><stop offset="0.42" stop-color="#0e1204" stop-opacity="0.05"/><stop offset="0.7" stop-color="#0e1204" stop-opacity="0.45"/><stop offset="1" stop-color="#0e1204" stop-opacity="0.7"/></radialGradient>
<clipPath id="fc"><rect x="0" y="0" width="182" height="101"/></clipPath>
</defs>
<g clip-path="url(#fc)">
<rect width="182" height="101" fill="#343a10"/>
<!-- bright canopy -->
<ellipse cx="98" cy="30" rx="44" ry="32" fill="#70821c" filter="url(#b6)"/>
<ellipse cx="100" cy="28" rx="30" ry="22" fill="#a4b22c" filter="url(#b4)"/>
<ellipse cx="92" cy="36" rx="16" ry="12" fill="#d0d84e" filter="url(#b3)"/>
<ellipse cx="108" cy="20" rx="16" ry="8" fill="#c0cc40" filter="url(#b3)"/>
<ellipse cx="84" cy="22" rx="10" ry="8" fill="#b4c238" filter="url(#b3)"/>
<!-- dark sides -->
<ellipse cx="20" cy="26" rx="32" ry="38" fill="#1f230a" filter="url(#b6)"/>
<ellipse cx="168" cy="22" rx="26" ry="32" fill="#20230a" filter="url(#b6)"/>
<ellipse cx="146" cy="6" rx="32" ry="8" fill="#23280c" filter="url(#b4)"/>
<ellipse cx="36" cy="3" rx="38" ry="6" fill="#222a0c" filter="url(#b4)"/>
<ellipse cx="10" cy="40" rx="22" ry="44" fill="#1a1e08" filter="url(#b4)" opacity="0.85"/>
<ellipse cx="40" cy="30" rx="16" ry="30" fill="#232609" filter="url(#b4)" opacity="0.7"/>
<ellipse cx="172" cy="30" rx="16" ry="34" fill="#1e2109" filter="url(#b4)" opacity="0.8"/>
<rect width="182" height="101" fill="url(#vg)"/>
<!-- trunks left -->
<g fill="none" stroke-linecap="round" filter="url(#rg)" opacity="0.92">
<path d="M4 70C8 40 14 16 22 0" stroke="#2a1d08" stroke-width="5"/>
<path d="M20 66C22 40 26 18 34 0" stroke="#1f1606" stroke-width="4"/>
<path d="M34 62C36 42 42 24 52 6" stroke="#2c1f09" stroke-width="4"/>
<path d="M46 60C48 44 54 30 66 12" stroke="#221907" stroke-width="3.5"/>
<path d="M60 62C58 46 62 34 74 18" stroke="#261c08" stroke-width="5"/>
<path d="M70 64C69 54 70 46 73 40" stroke="#23200c" stroke-width="4"/>
<path d="M12 50C14 30 20 12 28 0" stroke="#55641c" stroke-width="2.6"/>
<path d="M28 56C30 38 36 20 46 4" stroke="#4f5e1a" stroke-width="2.6"/>
<path d="M52 50C56 38 62 26 72 14" stroke="#5f6e1f" stroke-width="2.6"/>
<!-- arching branches right -->
<path d="M110 8C134 6 158 24 172 60" stroke="#2a1f0a" stroke-width="3"/>
<path d="M118 14C138 14 154 30 164 62" stroke="#30250c" stroke-width="3"/>
<path d="M124 22C138 24 148 38 154 62" stroke="#3a2c0e" stroke-width="3"/>
<path d="M114 12C136 12 156 28 168 60" stroke="#4c5a18" stroke-width="1.6"/>
<path d="M122 18C138 20 150 34 158 60" stroke="#55631b" stroke-width="1.6"/>
<path d="M176 0C178 20 180 40 180 60" stroke="#3a300e" stroke-width="4"/>
<path d="M128 70C126 56 128 44 134 34" stroke="#5a4a1e" stroke-width="5"/>
<path d="M140 66C140 54 142 46 146 38" stroke="#4c4a18" stroke-width="3"/>
</g>
<!-- tunnel end glow -->
<ellipse cx="95" cy="62" rx="10" ry="12" fill="#8f9a2c" filter="url(#b3)"/>
<ellipse cx="94" cy="66" rx="3.6" ry="9" fill="#e6e88c" filter="url(#b2)"/>
<ellipse cx="84" cy="60" rx="4" ry="7" fill="#3a3a12" filter="url(#b2)"/>
<ellipse cx="110" cy="58" rx="6" ry="9" fill="#6a7420" filter="url(#b2)"/>
<!-- banks -->
<path d="M0 52C24 50 50 56 70 70C80 78 88 86 92 101H0Z" fill="#28320d" filter="url(#b3)"/>
<path d="M182 50C160 54 140 62 126 74C118 82 114 92 116 101H182Z" fill="#5b5f1f" filter="url(#b3)"/>
<path d="M60 58C72 62 84 70 94 78L86 82C78 74 68 68 58 64Z" fill="#7d9a22" filter="url(#b2)"/>
<path d="M68 60C76 64 86 70 93 76" stroke="#a2bb34" stroke-width="1.6" fill="none" filter="url(#b1)"/>
<path d="M134 62C126 68 118 74 112 80L118 84C124 76 132 70 140 66Z" fill="#a9b234" filter="url(#b2)"/>
<path d="M122 60C116 66 110 72 104 78" stroke="#8f9c2c" stroke-width="2.4" fill="none" filter="url(#b2)"/>
<ellipse cx="30" cy="80" rx="30" ry="10" fill="#3a3412" filter="url(#b4)"/>
<ellipse cx="12" cy="95" rx="16" ry="6" fill="#3c4c16" filter="url(#b3)"/>
<ellipse cx="66" cy="92" rx="16" ry="8" fill="#4a3d16" filter="url(#b3)"/>
<!-- path -->
<path d="M92 77C98 75 106 75 112 77C118 84 126 94 134 101H56C70 94 84 86 92 77Z" fill="#7a653a" filter="url(#b2)"/>
<ellipse cx="103" cy="79.5" rx="8" ry="1.6" fill="#e9dfba" filter="url(#b1)"/>
<ellipse cx="100" cy="84.5" rx="11" ry="1.5" fill="#b9a676" filter="url(#b1)"/>
<ellipse cx="104" cy="89.5" rx="14" ry="2.2" fill="#e4d5ac" filter="url(#b2)"/>
<ellipse cx="96" cy="96" rx="20" ry="2.4" fill="#6a5530" filter="url(#b2)"/>
<!-- right bottom flowers -->
<ellipse cx="150" cy="78" rx="20" ry="8" fill="#5e6420" filter="url(#b3)"/>
<ellipse cx="170" cy="86" rx="13" ry="11" fill="#8a8546" filter="url(#b3)"/>
<ellipse cx="177" cy="90" rx="6" ry="8" fill="#c0b050" filter="url(#b2)"/>
<ellipse cx="146" cy="94" rx="12" ry="6" fill="#8f8b58" filter="url(#b2)"/>
<ellipse cx="132" cy="90" rx="8" ry="8" fill="#3f4616" filter="url(#b3)"/>
<g mask="url(#mk1)"><rect width="182" height="101" filter="url(#ny)" opacity="0.75"/></g>
<g mask="url(#mk2)"><rect width="182" height="101" filter="url(#nw)" opacity="0.45"/></g>
<ellipse cx="30" cy="84" rx="40" ry="16" fill="#1c2208" opacity="0.35" filter="url(#b4)"/>
<!-- texture -->
<rect width="182" height="101" filter="url(#nz)" opacity="0.4" style="mix-blend-mode:soft-light"/>
<rect width="182" height="101" filter="url(#nd)" opacity="0.42"/>
</g>
</svg>

<div class="a" style="left:880px;top:329px;width:76px;height:26px;border:1px solid #e2702a;border-radius:13px;color:#e0652a;font-size:12px;line-height:26px;text-align:center;letter-spacing:0.12px">Vorschau</div>
<div class="kv" style="left:817px;top:375px;width:98px;letter-spacing:0.25px">Dateiname:</div>
<div class="kv" style="left:924px;top:375px;width:98px;letter-spacing:0.25px">Wiederhergestellt</div>
<div class="kv" style="left:817px;top:398px;width:98px;letter-spacing:0.08px">Größe:</div>
<div class="kv" style="left:924px;top:398px;width:98px;letter-spacing:0.10px">782.18 KB</div>
<div class="kv" style="left:817px;top:421px;width:98px;letter-spacing:0.45px">Dimensionen:</div>
<div class="kv" style="left:924px;top:421px;width:98px;letter-spacing:0.12px">1920x1080</div>
<div class="kv" style="left:817px;top:444px;width:98px;letter-spacing:0.25px">Erstellungsdatum</div>
<div class="kv" style="left:924px;top:444px;width:98px;letter-spacing:0.25px">Unbekannt</div>
<div class="kv" style="left:817px;top:467px;width:98px;letter-spacing:0.22px">Änderungsdatum:</div>
<div class="kv" style="left:924px;top:467px;width:98px;letter-spacing:0.25px">Unbekannt</div>
<div id="footer"></div>
<div class="tx" style="left:15px;top:643px;font-size:12px;line-height:16px;color:#222;letter-spacing:0.13px">Gesamte <b>161,25 GB</b> aus <b>87622</b> Dateien.</div>
<div class="tx" style="left:243px;top:642px;font-size:14px;line-height:18px;color:#111;letter-spacing:0.08px"><b>782 KB</b> aus <b>1</b> ausgewählt.</div>
<div class="tx" style="left:15px;top:665px;font-size:12px;line-height:16px;color:#2a9fd8;text-decoration:underline;letter-spacing:0.165px">Haben Sie Probleme mit der Datenwiederherstellung? Klicken Sie hier für eine Anleitung.</div>
<div class="btn" style="left:815px;width:102px;border:1px solid #d2d2d2;background:#fff;color:#505050">Startseite</div>
<div class="btn" style="left:933px;width:102px;background:#279fd9;color:#fff;line-height:42px">Speichern</div>
<div class="a" style="left:0;top:41px;width:1px;height:659px;background:#28283a"></div>
<div class="a" style="left:1048.5px;top:41px;width:1.5px;height:659px;background:#28283a"></div>
<div class="a" style="left:0;top:698.7px;width:1050px;height:1.3px;background:#28283a"></div>
</div>
</body>
</html>
